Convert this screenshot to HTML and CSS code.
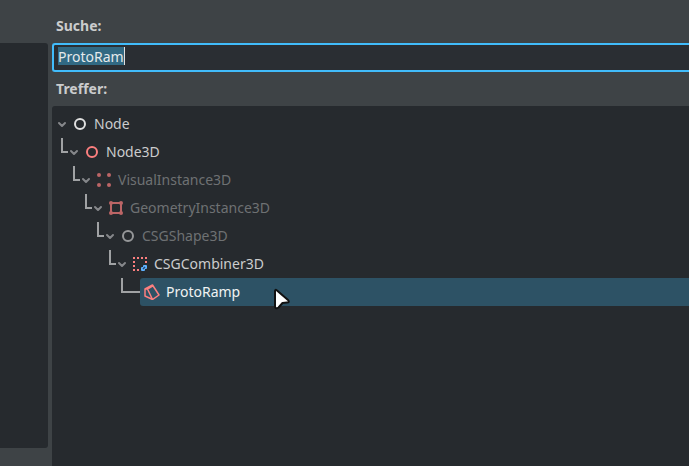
FILE: index.html
```html
<!DOCTYPE html>
<html lang="de">
<head>
<meta charset="utf-8">
<title>Node erstellen</title>
<link rel="stylesheet" href="styles.css">
</head>
<body>
<svg class="defs" aria-hidden="true">
  <symbol id="chevron" viewBox="0 0 12 12"><path d="M3 5l3 3 3-3" fill="none" stroke="#85878a" stroke-width="2" stroke-linecap="round" stroke-linejoin="round"/></symbol>
  <symbol id="ring" viewBox="0 0 16 16"><circle cx="8" cy="8" r="5" fill="none" stroke="currentColor" stroke-width="2"/></symbol>
</svg>
<div class="dialog">
  <aside class="side"></aside>
  <main class="main">
    <label class="caption" for="search">Suche:</label>
    <div class="field">
      <input class="search" id="search" type="text" value="ProtoRam">
    </div>
    <h2 class="caption">Treffer:</h2>
    <div class="tree">
      <ul>
        <li>
          <div class="row">
            <svg class="arrow"><use href="#chevron"/></svg>
            <svg class="icon white"><use href="#ring"/></svg>
            <span>Node</span>
          </div>
          <ul>
            <li>
              <div class="row">
                <i class="branch"></i>
                <svg class="arrow"><use href="#chevron"/></svg>
                <svg class="icon red"><use href="#ring"/></svg>
                <span>Node3D</span>
              </div>
              <ul>
                <li>
                  <div class="row off">
                    <i class="branch"></i>
                    <svg class="arrow"><use href="#chevron"/></svg>
                    <svg class="icon red" viewBox="0 0 16 16"><g fill="currentColor"><circle cx="3" cy="3" r="2"/><circle cx="13" cy="3" r="2"/><circle cx="3" cy="13" r="2"/><circle cx="13" cy="13" r="2"/></g></svg>
                    <span>VisualInstance3D</span>
                  </div>
                  <ul>
                    <li>
                      <div class="row off">
                        <i class="branch"></i>
                        <svg class="arrow"><use href="#chevron"/></svg>
                        <svg class="icon red" viewBox="0 0 16 16"><path d="M3 3h10v10H3z" fill="none" stroke="currentColor" stroke-width="2"/><g fill="currentColor"><circle cx="3" cy="3" r="2"/><circle cx="13" cy="3" r="2"/><circle cx="3" cy="13" r="2"/><circle cx="13" cy="13" r="2"/></g></svg>
                        <span>GeometryInstance3D</span>
                      </div>
                      <ul>
                        <li>
                          <div class="row off">
                            <i class="branch"></i>
                            <svg class="arrow"><use href="#chevron"/></svg>
                            <svg class="icon white"><use href="#ring"/></svg>
                            <span>CSGShape3D</span>
                          </div>
                          <ul>
                            <li>
                              <div class="row">
                                <i class="branch"></i>
                                <svg class="arrow"><use href="#chevron"/></svg>
                                <svg class="icon" viewBox="0 0 16 16"><path d="M1 1h2v2H1zM5 1h2v2H5zM9 1h2v2H9zM13 1h2v2h-2zM1 5h2v2H1zM13 5h2v2h-2zM1 9h2v2H1zM1 13h2v2H1zM5 13h2v2H5z" fill="#fc7f7f"/><path d="M12 9h2a1 1 0 0 1 1 1v2a1 1 0 0 1-1 1h-1v1a1 1 0 0 1-1 1h-2a1 1 0 0 1-1-1v-2a1 1 0 0 1 1-1h1v-1a1 1 0 0 1 1-1z" fill="#5fb2ff"/><path d="M11 13l2-2" stroke="#25466c" stroke-width="1.5"/></svg>
                                <span>CSGCombiner3D</span>
                              </div>
                              <ul>
                                <li>
                                  <div class="row leaf">
                                    <i class="branch long"></i>
                                    <button class="item" type="button">
                                      <svg class="icon red" viewBox="0 0 16 16"><path d="M1 5l7.5-4L15 11l-6.500 4.500L1 12zM1 5h2.500L8.500 15.500M3.500 5l5-3" fill="none" stroke="currentColor" stroke-width="1.5" stroke-linejoin="round"/></svg>
                                      <span>ProtoRamp</span>
                                    </button>
                                  </div>
                                </li>
                              </ul>
                            </li>
                          </ul>
                        </li>
                      </ul>
                    </li>
                  </ul>
                </li>
              </ul>
            </li>
          </ul>
        </li>
      </ul>
    </div>
  </main>
</div>
<svg class="pointer" viewBox="0 0 18 24" aria-hidden="true"><path d="M2 4Q2 2 4 3.500L15 13Q17 15.500 14 15.500L9.500 16L5.500 20.500Q2 22.500 2 19z" fill="#fff" stroke="#111" stroke-width="2" stroke-linejoin="round"/></svg>
</body>
</html>
```
FILE: styles.css
```css
* {
  box-sizing: border-box;
}

body {
  margin: 0;
  background: #3e4346;
  color: #cbcccd;
  font: 14px/20px "Noto Sans", sans-serif;
}

.defs {
  display: none;
}

.dialog {
  display: grid;
  grid-template-columns: 48px 1fr;
  column-gap: 4px;
  min-height: 100vh;
}

.side {
  margin: 43px 0 18px;
  border-radius: 0 3px 3px 0;
  background: #262a2e;
}

.main {
  display: flex;
  flex-direction: column;
  padding-top: 9px;
}

.caption {
  margin: 0;
  padding-left: 4px;
  font-size: 14px;
  font-weight: 700;
  line-height: 34px;
}

.field {
  display: flex;
  border: 2px solid #41bcfb;
  border-right: 0;
  border-radius: 3px 0 0 3px;
  background: #2a2e33;
}

.search {
  flex: 1;
  height: 25px;
  padding: 2px 4px 5px;
  border: 0;
  outline: 0;
  /* caret, then the selected range */
  background:
    linear-gradient(#e0e0e0, #e0e0e0) 66px 0 / 1px 100% no-repeat content-box,
    linear-gradient(#316983, #316983) 0 0 / 66px 100% no-repeat content-box;
  color: #e4e9ec;
  font: inherit;
}

.tree {
  flex: 1;
  padding-top: 4px;
  border-radius: 3px 0 0 0;
  background: #262a2e;
}

.tree ul {
  margin: 0;
  padding: 0;
  list-style: none;
}

.tree ul ul {
  padding-left: 12px;
}

.row {
  display: flex;
  align-items: center;
  height: 28px;
  padding-left: 4px;
}

.branch {
  flex: none;
  align-self: flex-start;
  width: 7px;
  height: 15px;
  margin-left: -7px;
  border: solid #a0a2a4;
  border-width: 0 0 2px 2px;
}

.branch.long {
  width: 19px;
}

.arrow {
  flex: none;
  width: 12px;
  height: 12px;
  margin-right: 4px;
}

.icon {
  flex: none;
  width: 16px;
  height: 16px;
  margin-right: 6px;
}

.white {
  color: #e0e0e0;
}

.red {
  color: #fc7f7f;
}

.off {
  color: #6e7173;
}

.off .icon {
  opacity: 0.7;
}

.off .white {
  opacity: 0.6;
}

.item {
  flex: 1;
  display: flex;
  align-items: center;
  height: 28px;
  padding: 0 4px;
  border: 0;
  border-radius: 3px 0 0 3px;
  background: #2d5265;
  color: #f0f2f3;
  font: inherit;
}

.pointer {
  position: absolute;
  left: 273px;
  top: 287px;
  width: 18px;
  height: 24px;
}
```
